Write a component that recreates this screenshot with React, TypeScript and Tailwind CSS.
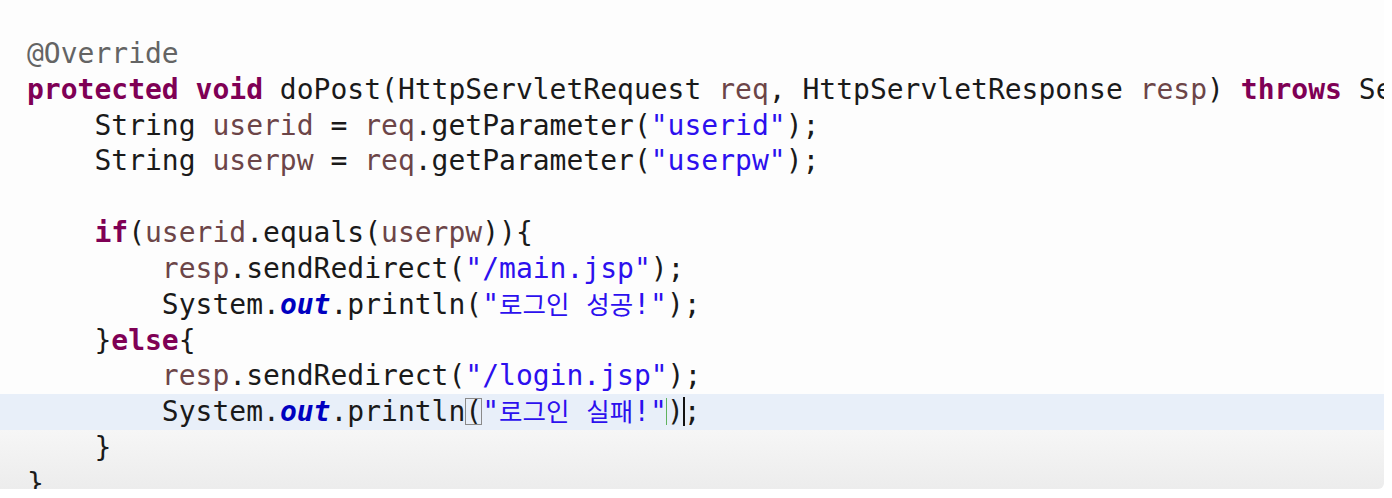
type Tok = { t: string; c?: string };

const kw = (t: string): Tok => ({ t, c: "text-[#7f0055] font-bold" });
const vr = (t: string): Tok => ({ t, c: "text-[#6c4548]" });
const str = (t: string): Tok => ({ t, c: "text-[#2c10ee]" });
const ann = (t: string): Tok => ({ t, c: "text-[#646464]" });
const p = (t: string): Tok => ({ t });

// korean words are drawn narrower than the mono cells
const Ko = ({ children }: { children: string }) => (
  <span className="text-[25.5px]">{children}</span>
);

const Line = ({ toks, className = "" }: { toks: Tok[]; className?: string }) => (
  <div className={`h-[35.83px] leading-[35.83px] whitespace-pre ${className}`}>
    {toks.map((tok, i) => (
      <span key={i} className={tok.c}>
        {tok.t}
      </span>
    ))}
    {toks.length === 0 && " "}
  </div>
);

export default function App() {
  return (
    <div className="w-[1392px] h-[498px] bg-white overflow-hidden">
      <div
        className="w-[1384px] h-[489px] overflow-hidden bg-[#fdfdfd] rounded-br-md pt-[36px] pl-[27px] text-[28px] text-[#1a1a1a]"
        style={{ fontFamily: '"DejaVu Sans Mono", "Noto Sans CJK KR", monospace' }}
      >
        <Line toks={[ann("@Override")]} />
        <Line
          toks={[
            kw("protected"),
            p(" "),
            kw("void"),
            p(" doPost(HttpServletRequest "),
            vr("req"),
            p(", HttpServletResponse "),
            vr("resp"),
            p(") "),
            kw("throws"),
            p(" ServletException, IOException {"),
          ]}
        />
        <Line
          toks={[p("    String "), vr("userid"), p(" = "), vr("req"), p(".getParameter("), str('"userid"'), p(");")]}
        />
        <Line
          toks={[p("    String "), vr("userpw"), p(" = "), vr("req"), p(".getParameter("), str('"userpw"'), p(");")]}
        />
        <Line toks={[]} />
        <Line toks={[p("    "), kw("if"), p("("), vr("userid"), p(".equals("), vr("userpw"), p(")){")]} />
        <Line toks={[p("        "), vr("resp"), p(".sendRedirect("), str('"/main.jsp"'), p(");")]} />
        <div className="h-[35.83px] leading-[35.83px] whitespace-pre">
          {"        System."}
          <span className="text-[#0000c0] font-bold italic">out</span>
          {".println("}
          <span className="text-[#2c10ee]">
            {'"'}
            <Ko>로그인</Ko>
            {" "}
            <Ko>성공</Ko>
            {'!"'}
          </span>
          {");"}
        </div>
        <Line toks={[p("    }"), kw("else"), p("{")]} />
        <Line toks={[p("        "), vr("resp"), p(".sendRedirect("), str('"/login.jsp"'), p(");")]} />
        <div className="h-[35.83px] leading-[35.83px] whitespace-pre bg-[#e8eff9] -ml-[27px] pl-[27px]">
          {"        System."}
          <span className="text-[#0000c0] font-bold italic">out</span>
          {".println"}
          <span className="relative">
            (
            <span className="absolute inset-x-0 top-[3px] bottom-[3px] border border-[#8a8a8a]" />
          </span>
          <span className="text-[#2c10ee]">
            {'"'}
            <Ko>로그인</Ko>
            {" "}
            <Ko>실패</Ko>
            {'!"'}
          </span>
          <span className="relative">
            <span className="absolute left-[-1px] top-[3px] bottom-[3px] w-px bg-[#5fb35f]" />
          </span>
          )
          <span className="relative">
            <span className="absolute left-[-1px] top-[2px] bottom-[2px] w-[2px] bg-[#111]" />
          </span>
          ;
        </div>
        <div className="-ml-[27px] pl-[27px] bg-gradient-to-b from-[#f6f6f6] to-[#eaeaea]">
          <Line toks={[p("    }")]} />
          <Line toks={[p("}")]} />
        </div>
      </div>
    </div>
  );
}
